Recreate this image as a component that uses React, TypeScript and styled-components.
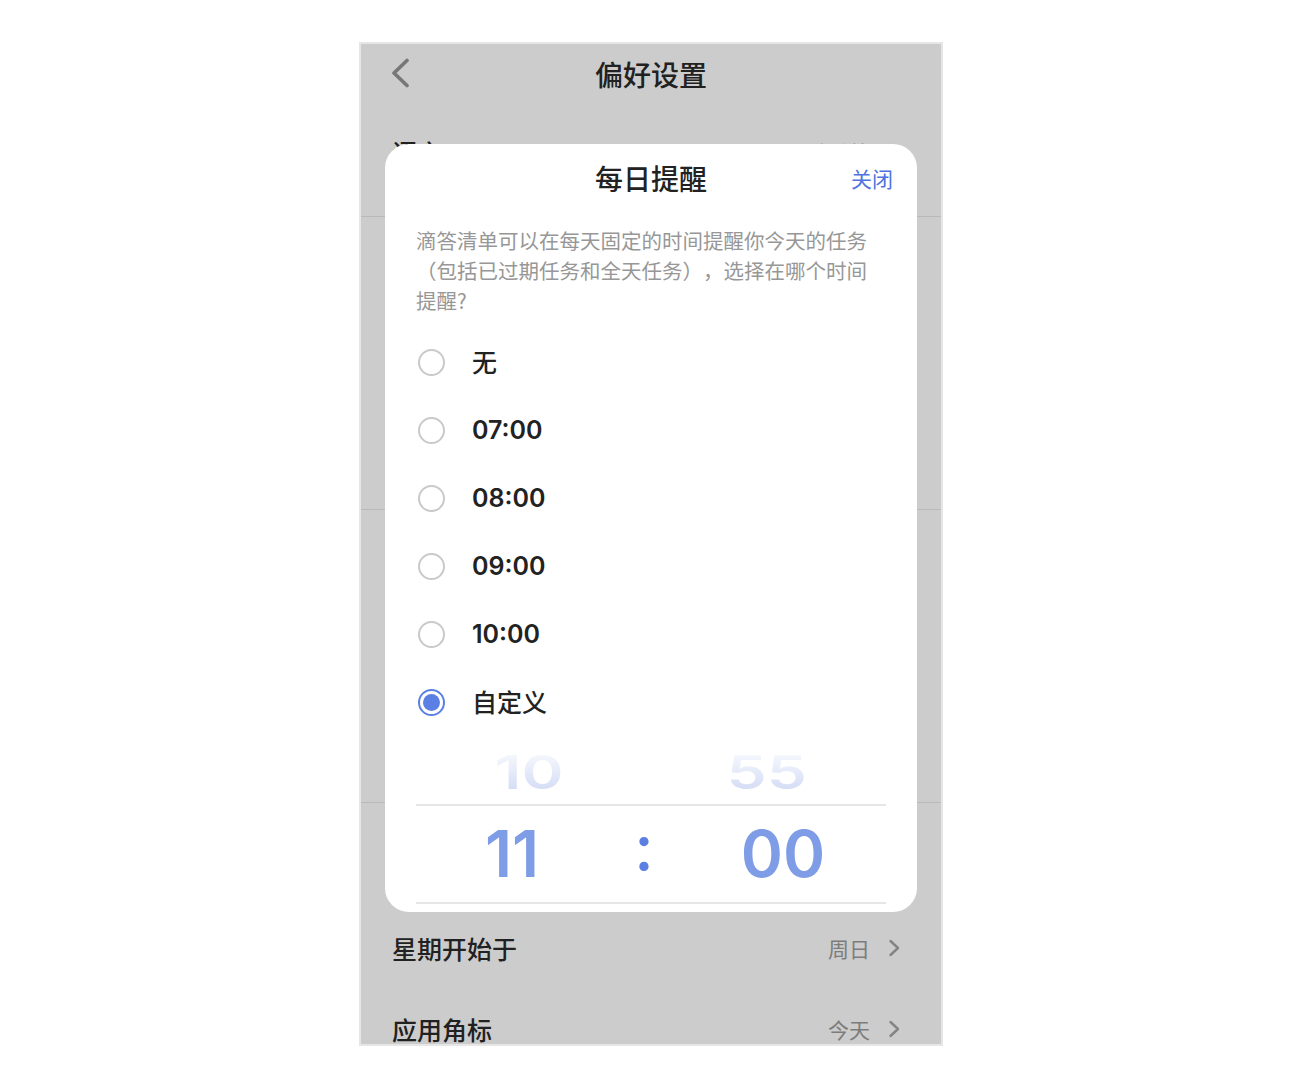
import React from "react";
import styled, { createGlobalStyle } from "styled-components";

const GlobalStyle = createGlobalStyle`
  html, body { margin: 0; padding: 0; background: #ffffff; }
  body { font-family: "Noto Sans CJK SC", "Noto Sans", sans-serif; }
`;

const Stage = styled.div`
  padding: 42px 0 0 359px;
`;

const Phone = styled.div`
  position: relative;
  width: 584px;
  height: 1004px;
  box-sizing: border-box;
  border: 2px solid #e6e6e6;
  background: #ffffff;
  overflow: hidden;
`;

const Header = styled.header`
  height: 60px;
  display: grid;
  grid-template-columns: 1fr auto 1fr;
  align-items: center;
`;

const BackButton = styled.div`
  padding-left: 29px;
  display: flex;
  align-items: center;
  margin-top: -2px;
`;

const HeaderTitle = styled.h1`
  margin: 0;
  font-size: 28px;
  font-weight: 500;
  color: #2a2a2a;
  line-height: 1;
`;

const Group = styled.section<{ $pt: number; $pb: number }>`
  padding-top: ${(p) => p.$pt}px;
  padding-bottom: ${(p) => p.$pb}px;
  border-bottom: 1px solid #e8e8e8;
`;

const Row = styled.div`
  height: 81px;
  display: flex;
  align-items: center;
  justify-content: space-between;
  padding: 0 41px 0 31px;
`;

const RowTitle = styled.span`
  font-size: 25px;
  color: #2a2a2a;
  font-weight: 500;
`;

const RowValue = styled.span`
  display: flex;
  align-items: center;
  gap: 18px;
  font-size: 21px;
  color: #9c9c9c;
`;

const Chevron = () => (
  <svg width="12" height="18" viewBox="0 0 12 18">
    <path d="M2.5 2 L10 9 L2.5 16" fill="none" stroke="#a6a6a6" strokeWidth="2.4" strokeLinecap="round" strokeLinejoin="round" />
  </svg>
);

const Overlay = styled.div`
  position: absolute;
  inset: 0;
  background: rgba(0, 0, 0, 0.2);
`;

const Modal = styled.div`
  position: absolute;
  left: 24px;
  top: 100px;
  width: 532px;
  height: 768px;
  border-radius: 24px;
  background: #ffffff;
  display: flex;
  flex-direction: column;
`;

const ModalHeader = styled.div`
  height: 68px;
  display: grid;
  grid-template-columns: 1fr auto 1fr;
  align-items: center;
`;

const ModalTitle = styled.h2`
  margin: 0;
  font-size: 28px;
  font-weight: 500;
  color: #222222;
  line-height: 1;
`;

const CloseButton = styled.span`
  justify-self: end;
  padding-right: 24px;
  font-size: 21px;
  color: #4d73e0;
`;

const Description = styled.p`
  margin: 13px 0 0;
  padding: 0 31px;
  font-size: 20.5px;
  line-height: 30px;
  color: #979797;
  text-spacing-trim: space-all;
`;

const OptionList = styled.div`
  margin-top: 13px;
  display: flex;
  flex-direction: column;
`;

const Option = styled.div`
  height: 68px;
  display: flex;
  align-items: center;
  gap: 27px;
  padding-left: 33px;
`;

const Radio = styled.span<{ $checked?: boolean }>`
  width: 27px;
  height: 27px;
  box-sizing: border-box;
  border-radius: 50%;
  border: 2px solid ${(p) => (p.$checked ? "#5b7fe3" : "#c9c9c9")};
  display: flex;
  align-items: center;
  justify-content: center;
  &::after {
    content: "";
    width: 17px;
    height: 17px;
    border-radius: 50%;
    background: ${(p) => (p.$checked ? "#5b7fe3" : "transparent")};
  }
`;

const OptionLabel = styled.span<{ $numeric?: boolean }>`
  font-family: "Inter", "Noto Sans CJK SC", sans-serif;
  font-size: 25px;
  font-weight: ${(p) => (p.$numeric ? 600 : 500)};
  color: #222222;
  margin-top: ${(p) => (p.$numeric ? 0 : -3)}px;
`;

const Picker = styled.div`
  margin: 0 31px;
  display: flex;
  flex-direction: column;
`;

const FadeRow = styled.div`
  height: 68px;
  display: grid;
  grid-template-columns: 192px 72px 206px;
  align-items: center;
  justify-items: center;
  transform: translateY(2px) scale(0.875, 0.72);
  transform-origin: center;
`;

const FadeDigits = styled.span`
  font-family: "Inter", sans-serif;
  font-size: 64px;
  font-weight: 600;
  line-height: 1;
  transform: scaleX(1.14);
  background: linear-gradient(to bottom, #f6f8fd 10%, #d0d9f4 100%);
  -webkit-background-clip: text;
  background-clip: text;
  color: transparent;
`;

const SelectedRow = styled.div`
  height: 96px;
  display: grid;
  grid-template-columns: 192px 72px 206px;
  align-items: center;
  justify-items: center;
  border-top: 2px solid #e6e6e6;
  border-bottom: 2px solid #e6e6e6;
`;

const BigDigits = styled.span`
  font-family: "Inter", sans-serif;
  font-size: 64px;
  font-weight: 600;
  line-height: 1;
  color: #7f9ce6;
`;

const Colon = styled.span`
  font-family: "Inter", sans-serif;
  font-size: 64px;
  font-weight: 500;
  line-height: 1;
  color: #5b7fe3;
  transform: translateY(-6px);
`;

const options = ["无", "07:00", "08:00", "09:00", "10:00", "自定义"];

export default function App() {
  return (
    <>
      <GlobalStyle />
      <Stage>
        <Phone>
          <Header>
            <BackButton>
              <svg width="20" height="30" viewBox="0 0 20 30">
                <path d="M17 2.5 L4 15 L17 27.5" fill="none" stroke="#959595" strokeWidth="3.6" strokeLinecap="round" strokeLinejoin="round" />
              </svg>
            </BackButton>
            <HeaderTitle>偏好设置</HeaderTitle>
            <span />
          </Header>

          <Group $pt={7} $pb={24}>
            <Row>
              <RowTitle>语言</RowTitle>
              <RowValue>跟随系统<Chevron /></RowValue>
            </Row>
          </Group>
          <Group $pt={26} $pb={23}>
            <Row>
              <RowTitle>提醒铃声</RowTitle>
              <RowValue>默认<Chevron /></RowValue>
            </Row>
            <Row>
              <RowTitle>每日提醒</RowTitle>
              <RowValue>11:00<Chevron /></RowValue>
            </Row>
            <Row>
              <RowTitle>稍后提醒</RowTitle>
              <RowValue>15分钟<Chevron /></RowValue>
            </Row>
          </Group>
          <Group $pt={26} $pb={23}>
            <Row>
              <RowTitle>智能识别日期</RowTitle>
              <RowValue><Chevron /></RowValue>
            </Row>
            <Row>
              <RowTitle>移除识别文字</RowTitle>
              <RowValue><Chevron /></RowValue>
            </Row>
            <Row>
              <RowTitle>时区</RowTitle>
              <RowValue>自动<Chevron /></RowValue>
            </Row>
          </Group>
          <Group $pt={23} $pb={23}>
            <Row>
              <RowTitle>节假日</RowTitle>
              <RowValue><Chevron /></RowValue>
            </Row>
            <Row>
              <RowTitle>星期开始于</RowTitle>
              <RowValue>周日<Chevron /></RowValue>
            </Row>
            <Row>
              <RowTitle>应用角标</RowTitle>
              <RowValue>今天<Chevron /></RowValue>
            </Row>
          </Group>

          <Overlay />

          <Modal>
            <ModalHeader>
              <span />
              <ModalTitle>每日提醒</ModalTitle>
              <CloseButton>关闭</CloseButton>
            </ModalHeader>
            <Description>
              滴答清单可以在每天固定的时间提醒你今天的任务
              <br />
              （包括已过期任务和全天任务），选择在哪个时间
              <br />
              提醒?
            </Description>
            <OptionList>
              {options.map((o) => (
                <Option key={o}>
                  <Radio $checked={o === "自定义"} />
                  <OptionLabel $numeric={/\d/.test(o)}>{o}</OptionLabel>
                </Option>
              ))}
            </OptionList>
            <Picker>
              <FadeRow>
                <FadeDigits>10</FadeDigits>
                <span />
                <FadeDigits>55</FadeDigits>
              </FadeRow>
              <SelectedRow>
                <BigDigits>11</BigDigits>
                <Colon>:</Colon>
                <BigDigits>00</BigDigits>
              </SelectedRow>
            </Picker>
          </Modal>
        </Phone>
      </Stage>
    </>
  );
}
